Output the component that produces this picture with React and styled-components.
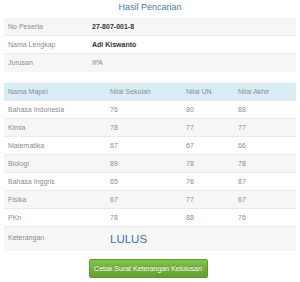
import React from "react";
import styled, { createGlobalStyle } from "styled-components";

const Global = createGlobalStyle`
  html, body { margin: 0; padding: 0; background: #fff; }
  body { font-family: "Liberation Sans", Arial, sans-serif; }
`;

const Page = styled.div`
  width: 300px;
  padding: 0 4px;
  box-sizing: border-box;
`;

const Title = styled.h3`
  margin: 0 0 3px;
  height: 14px;
  line-height: 14px;
  font-size: 9px;
  font-weight: normal;
  text-align: center;
  color: #4a7aa6;
`;

const Table = styled.table`
  width: 292px;
  border-collapse: collapse;
  table-layout: fixed;
  margin-bottom: ${(p) => p.$mb || 0}px;
`;

const Row = styled.tr`
  background: ${(p) => (p.$head ? "#d9edf7" : p.$odd ? "#f6f6f6" : "#fff")};
  border-top: 1px solid ${(p) => (p.$first ? "transparent" : "#ebebeb")};
`;

const Cell = styled.td`
  height: ${(p) => p.$h || 18}px;
  padding: 0 0 0 4px;
  font-size: 7px;
  line-height: 9px;
  color: ${(p) => (p.$strong ? "#333" : "#8c8c8c")};
  font-weight: ${(p) => (p.$strong ? "bold" : "normal")};
  vertical-align: ${(p) => (p.$top ? "top" : "middle")};
  padding-top: ${(p) => (p.$top ? 6 : 0)}px;
  white-space: nowrap;
  overflow: hidden;
  box-sizing: border-box;
`;

const Status = styled.span`
  font-size: 11.5px;
  line-height: 14px;
  color: #3b6fc2;
`;

const Actions = styled.div`
  display: flex;
  justify-content: center;
  padding-top: 8px;
`;

const Button = styled.button`
  width: 119px;
  height: 19px;
  margin-left: -4px;
  padding: 0;
  border: 1px solid #5f9a2c;
  border-radius: 2px;
  background: linear-gradient(#82c24a, #629f30);
  color: #fff;
  font-family: "Liberation Sans", Arial, sans-serif;
  font-size: 7px;
  text-shadow: 0 -1px 0 rgba(0, 0, 0, 0.2);
  box-shadow: 0 1px 1px rgba(0, 0, 0, 0.15);
`;

const info = [
  ["No Peserta", "27-807-001-8", true],
  ["Nama Lengkap", "Adi Kiswanto", true],
  ["Jurusan", "IPA", false],
];

const grades = [
  ["Bahasa Indonesia", 76, 80, 88],
  ["Kimia", 78, 77, 77],
  ["Matematika", 67, 67, 66],
  ["Biologi", 89, 78, 78],
  ["Bahasa Inggris", 65, 76, 87],
  ["Fisika", 67, 77, 67],
  ["PKn", 78, 88, 76],
];

export default function App() {
  return (
    <Page>
      <Global />
      <Title>Hasil Pencarian</Title>
      <Table $mb={10}>
        <colgroup>
          <col style={{ width: 84 }} />
          <col />
        </colgroup>
        <tbody>
          {info.map(([k, v, s], i) => (
            <Row key={k} $odd={i % 2 === 0} $first={i === 0}>
              <Cell>{k}</Cell>
              <Cell $strong={s}>{v}</Cell>
            </Row>
          ))}
        </tbody>
      </Table>
      <Table>
        <colgroup>
          <col style={{ width: 102 }} />
          <col style={{ width: 76 }} />
          <col style={{ width: 52 }} />
          <col />
        </colgroup>
        <tbody>
          <Row $head $first>
            <Cell>Nama Mapel</Cell>
            <Cell>Nilai Sekolah</Cell>
            <Cell>Nilai UN</Cell>
            <Cell>Nilai Akhir</Cell>
          </Row>
          {grades.map(([m, a, b, c], i) => (
            <Row key={m} $odd={i % 2 === 1}>
              <Cell>{m}</Cell>
              <Cell>{a}</Cell>
              <Cell>{b}</Cell>
              <Cell>{c}</Cell>
            </Row>
          ))}
          <Row $odd>
            <Cell $h={25} $top>Keterangan</Cell>
            <Cell $h={25} colSpan={3}>
              <Status>LULUS</Status>
            </Cell>
          </Row>
        </tbody>
      </Table>
      <Actions>
        <Button>Cetak Surat Keterangan Kelulusan</Button>
      </Actions>
    </Page>
  );
}
